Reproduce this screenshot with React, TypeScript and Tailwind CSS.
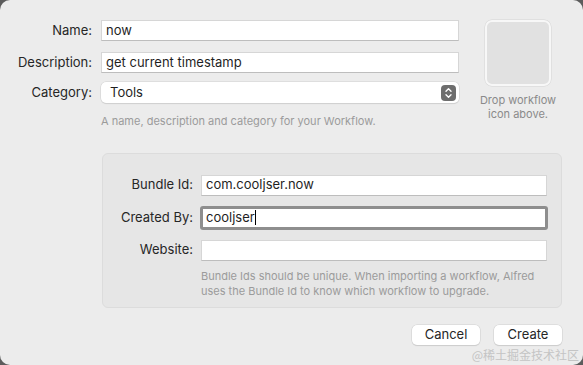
import React from "react";

function Field({ value, focused, cursor }: { value: string; focused?: boolean; cursor?: boolean }) {
  if (focused) {
    return (
      <div className="h-[24px] rounded-[3px] bg-[#8e8e8e] p-[3px] -mx-[1px]">
        <div className="h-full bg-white flex items-center pl-[3px] text-[13px] text-[#1f1f1f]">
          {value}
          {cursor && <span className="inline-block w-[1px] h-[15px] bg-black ml-[0px]" />}
        </div>
      </div>
    );
  }
  return (
    <div className="h-[21px] bg-white border border-[#d6d6d6] border-b-[#bdbdbd] flex items-center pl-[4px] text-[13px] text-[#1f1f1f]">
      {value}
    </div>
  );
}

export default function App() {
  return (
    <div className="w-[583px] h-[365px] bg-[#5c5c5c] overflow-hidden" style={{ fontFamily: "Inter, 'Noto Sans CJK SC', sans-serif" }}>
      <div className="relative w-full h-full bg-[#ececec] rounded-[10px] flex flex-col">
        {/* Top section */}
        <div className="flex pt-[20px] pl-[10px]">
          <div className="flex flex-col w-[449px] shrink-0">
            <div className="grid grid-cols-[82px_358px] gap-x-[9px] gap-y-[11px] items-center">
              <div className="text-right text-[13px] text-[#262626]">Name:</div>
              <Field value="now" />
              <div className="text-right text-[13px] text-[#262626]">Description:</div>
              <Field value="get current timestamp" />
              <div className="text-right text-[13px] text-[#262626] -mt-[2px]">Category:</div>
              <div className="-mt-[2px] h-[21px] bg-white rounded-[5px] shadow-[0_0_0_0.5px_#d0d0d0,0_1px_1px_rgba(0,0,0,0.12)] flex items-center justify-between pl-[9px] pr-[3px] text-[13px] text-[#1f1f1f]">
                <span>Tools</span>
                <div className="w-[15px] h-[16px] rounded-[4px] bg-[#6d6d6d] flex items-center justify-center">
                  <svg width="9" height="12" viewBox="0 0 9 12" fill="none" stroke="white" strokeWidth="1.4" strokeLinecap="round" strokeLinejoin="round">
                    <path d="M2 4.3 L4.5 1.8 L7 4.3" />
                    <path d="M2 7.7 L4.5 10.2 L7 7.7" />
                  </svg>
                </div>
              </div>
            </div>
            <div className="pl-[91px] mt-[10px] text-[11px] text-[#9b9b9b]">A name, description and category for your Workflow.</div>
          </div>
          <div className="flex flex-col items-center ml-[26px] w-[66px] shrink-0">
            <div className="w-[66px] h-[66px] shrink-0 rounded-[7px] bg-[#e1e1e1] border-[2px] border-[#f7f7f7] shadow-[0_0_0_0.5px_#d4d4d4]" />
            <div className="mt-[7px] text-[11px] leading-[14px] text-[#8a8a8a] text-center whitespace-nowrap">
              Drop workflow
              <br />
              icon above.
            </div>
          </div>
        </div>

        {/* Group box */}
        <div className="mt-[23px] ml-[102px] mr-[21px] h-[155px] rounded-[6px] bg-[#e6e6e6] border border-[#dcdcdc] pt-[21px] pr-[14px]">
          <div className="grid grid-cols-[90px_1fr] gap-x-[8px] gap-y-[10px] items-center">
            <div className="text-right text-[13px] text-[#262626]">Bundle Id:</div>
            <Field value="com.cooljser.now" />
            <div className="text-right text-[13px] text-[#262626]">Created By:</div>
            <Field value="cooljser" focused cursor />
            <div className="text-right text-[13px] text-[#262626]">Website:</div>
            <Field value="" />
          </div>
          <div className="pl-[98px] mt-[8px] text-[11px] leading-[15px] text-[#9b9b9b]">
            Bundle Ids should be unique. When importing a workflow, Alfred
            <br />
            uses the Bundle Id to know which workflow to upgrade.
          </div>
        </div>

        {/* Buttons */}
        <div className="flex justify-end gap-[14px] mt-[17px] mr-[21px]">
          <div className="w-[68px] h-[20px] rounded-[5px] bg-white shadow-[0_0_0_0.5px_#cfcfcf,0_1px_1px_rgba(0,0,0,0.15)] flex items-center justify-center text-[13px] text-[#262626]">
            Cancel
          </div>
          <div className="w-[68px] h-[20px] rounded-[5px] bg-white shadow-[0_0_0_0.5px_#cfcfcf,0_1px_1px_rgba(0,0,0,0.15)] flex items-center justify-center text-[13px] text-[#262626]">
            Create
          </div>
        </div>

        <div className="absolute right-[4px] bottom-[2px] text-[12px] leading-[16px] text-[#c4c4c4]" style={{ fontFamily: "'Noto Sans CJK SC', serif" }}>
          @稀土掘金技术社区
        </div>
      </div>
    </div>
  );
}
